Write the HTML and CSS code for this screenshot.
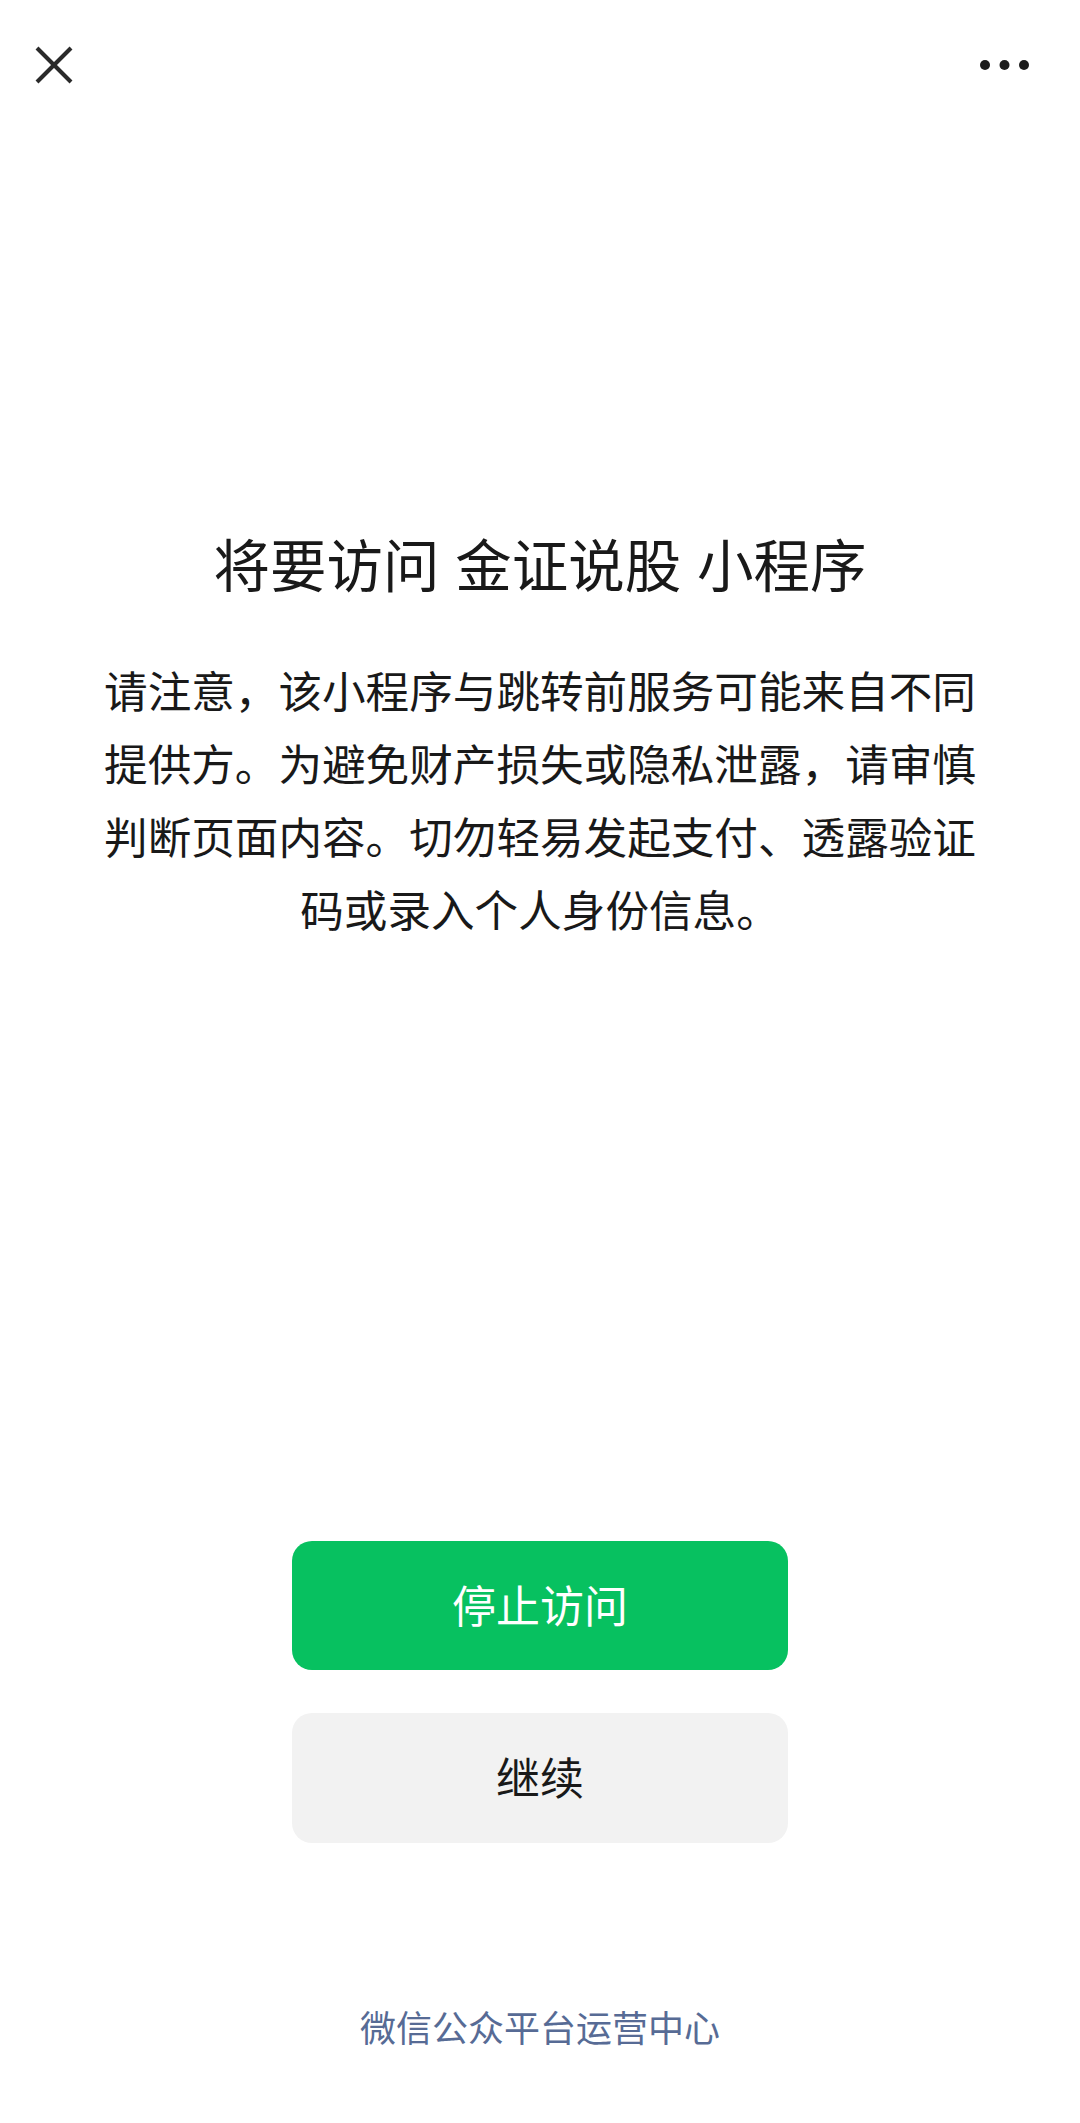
FILE: index.html
```html
<!DOCTYPE html>
<html lang="zh-CN">
<head>
<meta charset="utf-8">
<title>将要访问 金证说股 小程序</title>
<link rel="stylesheet" href="styles.css">
</head>
<body>
<div class="page">
  <header class="topbar">
    <svg class="icon-close" width="38" height="38" viewBox="0 0 38 38" aria-label="关闭">
      <line x1="2" y1="2" x2="36" y2="36" />
      <line x1="36" y1="2" x2="2" y2="36" />
    </svg>
    <svg class="icon-more" width="49" height="10" viewBox="0 0 49 10" aria-label="更多">
      <circle cx="5" cy="5" r="5" />
      <circle cx="24.5" cy="5" r="5" />
      <circle cx="44" cy="5" r="5" />
    </svg>
  </header>
  <main class="content">
    <h1 class="title">将要访问 金证说股 小程序</h1>
    <p class="desc">请注意，该小程序与跳转前服务可能来自不同提供方。为避免财产损失或隐私泄露，请审慎判断页面内容。切勿轻易发起支付、透露验证码或录入个人身份信息。</p>
  </main>
  <div class="actions">
    <button class="btn btn-primary">停止访问</button>
    <button class="btn btn-default">继续</button>
  </div>
  <footer class="footer">微信公众平台运营中心</footer>
</div>
</body>
</html>
```
FILE: styles.css
```css
html, body {
  margin: 0;
  padding: 0;
  background: #ffffff;
}
body {
  font-family: "Noto Sans CJK SC", "Noto Sans", sans-serif;
  color: #191919;
}
.page {
  width: 1080px;
  min-height: 2123px;
  display: flex;
  flex-direction: column;
}
.topbar {
  height: 130px;
  display: flex;
  align-items: center;
  justify-content: space-between;
  padding: 0 51px 0 35px;
}
.icon-close {
  display: block;
  stroke: #2a2a2a;
  stroke-width: 4;
  stroke-linecap: butt;
}
.icon-more {
  display: block;
  fill: #1c1c1c;
}
.content {
  display: flex;
  flex-direction: column;
  align-items: center;
}
.title {
  margin: 393px 0 0;
  font-size: 56.5px;
  line-height: 78px;
  font-weight: 400;
  text-align: center;
  word-spacing: 3px;
  color: #191919;
}
.desc {
  margin: 52px 0 0;
  padding: 0 96px;
  font-size: 43.6px;
  line-height: 73px;
  text-align: center;
  color: #191919;
}
.actions {
  margin-top: 596px;
  display: flex;
  flex-direction: column;
  align-items: center;
  gap: 43px;
}
.btn {
  width: 496px;
  border: none;
  border-radius: 20px;
  font-family: "Noto Sans CJK SC", "Noto Sans", sans-serif;
  font-size: 44px;
  display: flex;
  align-items: center;
  justify-content: center;
  padding: 0 0 4px;
}
.btn-primary {
  height: 129px;
  background: #07c160;
  color: #ffffff;
}
.btn-default {
  height: 130px;
  background: #f2f2f2;
  color: #191919;
}
.footer {
  margin-top: 158px;
  font-size: 36px;
  line-height: 50px;
  text-align: center;
  color: #576b95;
}
```
